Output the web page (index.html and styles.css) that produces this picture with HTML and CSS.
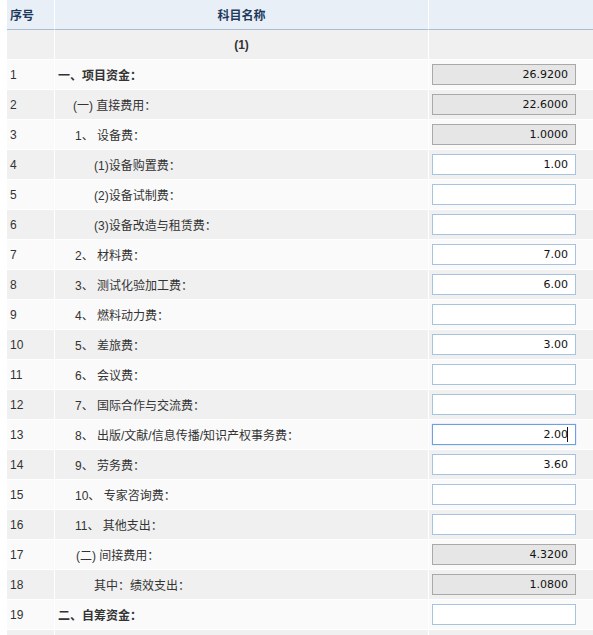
FILE: index.html
```html
<!DOCTYPE html>
<html lang="zh-CN">
<head>
<meta charset="utf-8">
<title>科目名称</title>
<link rel="stylesheet" href="styles.css">
</head>
<body>
<table class="budget">
  <colgroup>
    <col class="c-no">
    <col class="c-name">
    <col class="c-val">
  </colgroup>
  <thead>
    <tr class="head">
      <th class="no">序号</th>
      <th class="name-h">科目名称</th>
      <th></th>
    </tr>
  </thead>
  <tbody>
    <tr class="even">
      <td></td>
      <td class="sub-h">(1)</td>
      <td></td>
    </tr>
    <tr class="odd"><td class="no">1</td><td class="name l0 b">一、项目资金：</td><td class="val"><input class="ro" readonly value="26.9200"></td></tr>
    <tr class="even"><td class="no">2</td><td class="name l1">(一) 直接费用：</td><td class="val"><input class="ro" readonly value="22.6000"></td></tr>
    <tr class="odd"><td class="no">3</td><td class="name l2">1、 设备费：</td><td class="val"><input class="ro" readonly value="1.0000"></td></tr>
    <tr class="even"><td class="no">4</td><td class="name l3">(1)设备购置费：</td><td class="val"><input value="1.00"></td></tr>
    <tr class="odd"><td class="no">5</td><td class="name l3">(2)设备试制费：</td><td class="val"><input value=""></td></tr>
    <tr class="even"><td class="no">6</td><td class="name l3">(3)设备改造与租赁费：</td><td class="val"><input value=""></td></tr>
    <tr class="odd"><td class="no">7</td><td class="name l2">2、 材料费：</td><td class="val"><input value="7.00"></td></tr>
    <tr class="even"><td class="no">8</td><td class="name l2">3、 测试化验加工费：</td><td class="val"><input value="6.00"></td></tr>
    <tr class="odd"><td class="no">9</td><td class="name l2">4、 燃料动力费：</td><td class="val"><input value=""></td></tr>
    <tr class="even"><td class="no">10</td><td class="name l2">5、 差旅费：</td><td class="val"><input value="3.00"></td></tr>
    <tr class="odd"><td class="no">11</td><td class="name l2">6、 会议费：</td><td class="val"><input value=""></td></tr>
    <tr class="even"><td class="no">12</td><td class="name l2">7、 国际合作与交流费：</td><td class="val"><input value=""></td></tr>
    <tr class="odd"><td class="no">13</td><td class="name l2">8、 出版/文献/信息传播/知识产权事务费：</td><td class="val"><input class="focus" value="2.00"></td></tr>
    <tr class="even"><td class="no">14</td><td class="name l2">9、 劳务费：</td><td class="val"><input value="3.60"></td></tr>
    <tr class="odd"><td class="no">15</td><td class="name l2">10、 专家咨询费：</td><td class="val"><input value=""></td></tr>
    <tr class="even"><td class="no">16</td><td class="name l2">11、 其他支出：</td><td class="val"><input value=""></td></tr>
    <tr class="odd"><td class="no">17</td><td class="name l1b">(二) 间接费用：</td><td class="val"><input class="ro" readonly value="4.3200"></td></tr>
    <tr class="even"><td class="no">18</td><td class="name l3">其中：绩效支出：</td><td class="val"><input class="ro" readonly value="1.0800"></td></tr>
    <tr class="odd"><td class="no">19</td><td class="name l0 b">二、自筹资金：</td><td class="val"><input value=""></td></tr>
    <tr class="even"><td class="no"></td><td class="name"></td><td class="val"></td></tr>
  </tbody>
</table>
</body>
</html>
```

FILE: styles.css
```css
html, body {
  margin: 0;
  padding: 0;
  background: #fff;
  overflow: hidden;
}

body {
  font-family: "Liberation Sans", "Noto Sans CJK SC", Arial, sans-serif;
  font-size: 12px;
  color: #333;
}

.budget {
  margin-left: 7px;
  width: 586px;
  table-layout: fixed;
  border-collapse: separate;
  border-spacing: 0;
}

.c-no { width: 48px; }
.c-name { width: 374px; }
.c-val { width: 164px; }

.budget th,
.budget td {
  box-sizing: border-box;
  padding: 0;
  border-right: 1px solid #fff;
  border-bottom: 1px solid #fff;
  height: 30px;
  vertical-align: middle;
  white-space: nowrap;
  overflow: hidden;
}

.budget th:last-child,
.budget td:last-child {
  border-right: 0;
}

.budget .head th {
  background: #e9eff7;
  color: #1d3a5c;
  font-weight: bold;
  font-size: 12px;
  border-bottom: 1px solid #a9bdd3;
}

.budget .head th.no {
  text-align: left;
  padding-left: 3px;
}

.budget .head th.name-h {
  text-align: center;
}

.even td { background: #f0f0f0; }
.odd td { background: #fafafa; }

.budget td.sub-h {
  text-align: center;
  font-weight: bold;
  color: #333;
}

.budget td.no {
  padding-left: 3px;
  color: #333;
}

.budget td.name { color: #333; }
.budget td.b { font-weight: bold; }
.budget td.l0 { padding-left: 3px; }
.budget td.l1 { padding-left: 18px; }
.budget td.l1b { padding-left: 21px; }
.budget td.l2 { padding-left: 20px; }
.budget td.l3 { padding-left: 39px; }

.budget td.val {
  padding-left: 3px;
}

.val input {
  box-sizing: border-box;
  display: block;
  width: 144px;
  height: 21px;
  margin: 0;
  padding: 0 7px 0 2px;
  border: 1px solid #a6c3e0;
  background: #fff;
  font-family: "DejaVu Sans", Verdana, sans-serif;
  font-size: 11px;
  color: #111;
  text-align: right;
  outline: none;
}

.val input.ro {
  background: #e6e6e6;
  border-color: #a9a9a9;
}

.val input.focus {
  border-color: #6f9fe0;
  box-shadow: 0 0 1px #8fb6ea;
  background: #fff linear-gradient(#111, #111) no-repeat right 7px center / 1px 15px;
}
```
